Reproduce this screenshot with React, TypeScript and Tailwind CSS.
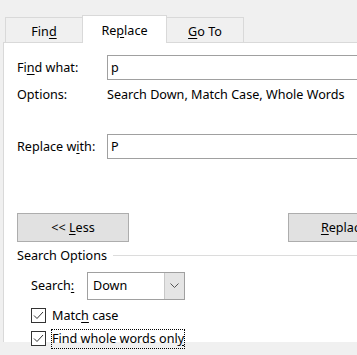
import React from 'react';

const font = "font-['Noto_Sans','Open_Sans',sans-serif]";

const Key = ({ children }: { children: React.ReactNode }) => (
  <span className="underline underline-offset-2 decoration-1">{children}</span>
);

const Tab = ({ active, children, className = '' }: { active?: boolean; children: React.ReactNode; className?: string }) => (
  <div
    className={`flex items-center justify-center border border-b-0 border-[#d9d9d9] ${
      active ? 'relative z-10 h-[28px] -mb-px bg-white' : 'h-[25px] bg-[#f0f0f0]'
    } ${className}`}
  >
    <span className={active ? 'pt-[3px]' : 'pt-[3px]'}>{children}</span>
  </div>
);

const TextBox = ({ value }: { value: string }) => (
  <div className="h-[25px] flex-1 border border-[#a0a0a0] bg-white pl-[3px] flex items-center -mr-[20px]">
    <span>{value}</span>
  </div>
);

const Check = ({ children, focused }: { children: React.ReactNode; focused?: boolean }) => (
  <div className="flex items-center h-[21px] pl-[14px]">
    <div className="w-[15px] h-[15px] border border-[#333] bg-white flex items-center justify-center shrink-0">
      <svg width="13" height="13" viewBox="0 0 13 13">
        <polyline points="2,6.5 5,9.5 11,3" fill="none" stroke="#333" strokeWidth="1" />
      </svg>
    </div>
    <div className={`ml-[5px] h-[20px] flex items-center ${focused ? 'border border-dotted border-black' : 'border border-transparent'}`}>
      <span>{children}</span>
    </div>
  </div>
);

export default function App() {
  return (
    <div className={`w-[357px] h-[355px] overflow-hidden bg-[#f0f0f0] text-[12.6px] leading-[16px] text-black ${font}`}>
      {/* tab strip */}
      <div className="flex items-end h-[27px] mt-[15px] pl-[5px]">
        <Tab className="w-[78px]">Fin<Key>d</Key></Tab>
        <Tab active className="w-[85px] -ml-px">Re<Key>p</Key>lace</Tab>
        <Tab className="w-[78px] -ml-px"><Key>G</Key>o To</Tab>
      </div>

      {/* page */}
      <div className="ml-[3px] h-[300px] border-t border-l border-[#d9d9d9] bg-white pl-[13px] pt-[12px] flex flex-col">
        <div className="flex items-center">
          <div className="w-[90px] shrink-0">Fi<Key>n</Key>d what:</div>
          <TextBox value="p" />
        </div>
        <div className="flex items-center mt-[7px]">
          <div className="w-[90px] shrink-0">Options:</div>
          <div className="whitespace-nowrap">Search Down, Match Case, Whole Words</div>
        </div>
        <div className="flex items-center mt-[31px]">
          <div className="w-[90px] shrink-0">Replace w<Key>i</Key>th:</div>
          <TextBox value="P" />
        </div>

        <div className="flex mt-[54px]">
          <button className="w-[112px] h-[29px] shrink-0 border border-[#adadad] bg-[#e1e1e1]">
            &lt;&lt; <Key>L</Key>ess
          </button>
          <button className="ml-[159px] w-[112px] h-[29px] shrink-0 border border-[#adadad] bg-[#e1e1e1]">
            <Key>R</Key>eplace
          </button>
        </div>

        <div className="flex items-center mt-[6px]">
          <span>Search Options</span>
          <div className="flex-1 h-px bg-[#dcdcdc] ml-[6px] -mr-[20px] -mt-[1px]" />
        </div>

        <div className="flex items-center mt-[8px] pl-[14px]">
          <div className="w-[56px] shrink-0">Search<Key>:</Key></div>
          <div className="w-[98px] h-[28px] border border-[#a0a0a0] bg-white flex">
            <div className="flex-1 flex items-center pl-[5px]"><span>Down</span></div>
            <div className="w-[20px] bg-[#e5e5e5] border-l border-[#c8c8c8] flex items-center justify-center">
              <svg width="9" height="6" viewBox="0 0 9 6">
                <polyline points="0.5,0.5 4.5,4.5 8.5,0.5" fill="none" stroke="#555" strokeWidth="1" />
              </svg>
            </div>
          </div>
        </div>

        <div className="mt-[5px]">
          <Check>Matc<Key>h</Key> case</Check>
        </div>
        <div className="mt-[2px]">
          <Check focused>Find whole words onl<Key>y</Key></Check>
        </div>
      </div>
    </div>
  );
}
